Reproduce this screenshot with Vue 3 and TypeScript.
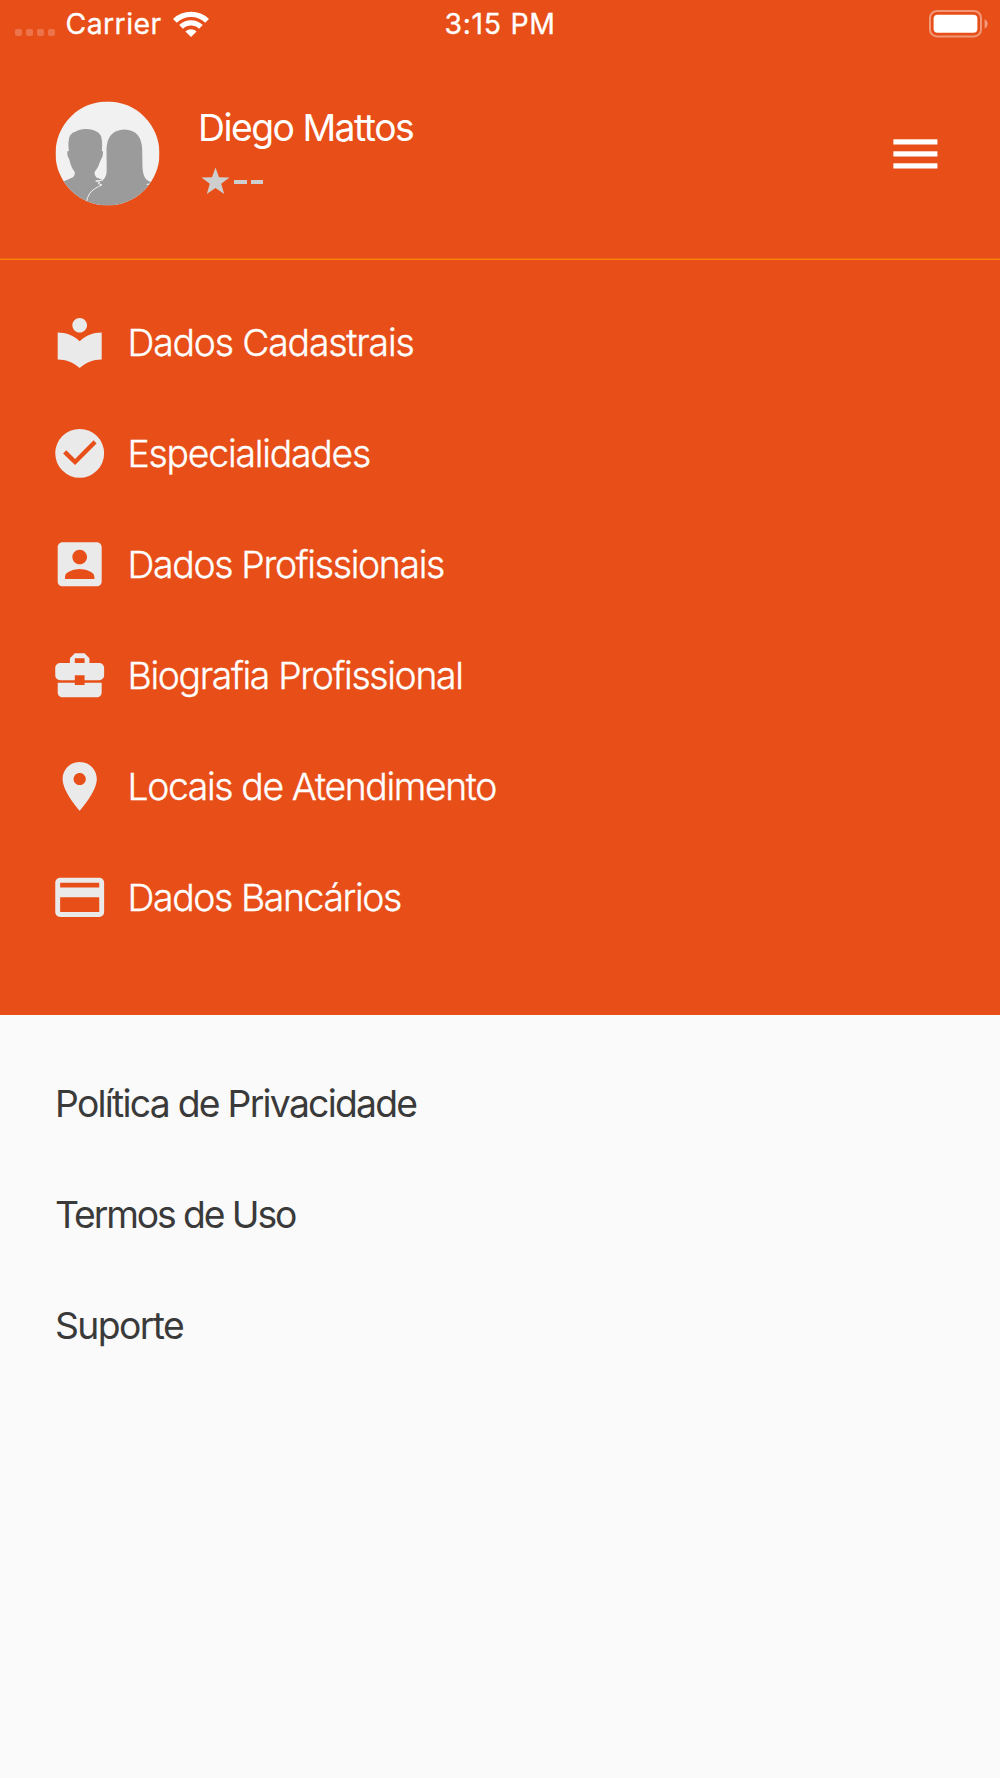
<script setup lang="ts">
interface MenuItem {
  label: string
  icon: string
  spacing: number
}

interface LinkItem {
  label: string
  spacing: number
}

const signalDots: number[] = [0, 1, 2, 3]

const menu: MenuItem[] = [
  {
    label: 'Dados Cadastrais',
    spacing: -1.15,
    icon: 'M12 11.55C9.64 9.35 6.48 8 3 8v11c3.48 0 6.64 1.35 9 3.55 2.36-2.19 5.52-3.55 9-3.55V8c-3.48 0-6.64 1.35-9 3.55zM12 8c1.66 0 3-1.34 3-3s-1.34-3-3-3-3 1.34-3 3 1.34 3 3 3z',
  },
  {
    label: 'Especialidades',
    spacing: -1.2,
    icon: 'M12 2a10 10 0 1 0 0 20a10 10 0 1 0 0-20zM5.2 12.1l1.3-1.4l3.6 3.6l7.6-7.6l1.2 1.3l-8.8 8.8z',
  },
  {
    label: 'Dados Profissionais',
    spacing: -1.3,
    icon: 'M3 5v14c0 1.1.89 2 2 2h14c1.1 0 2-.9 2-2V5c0-1.1-.9-2-2-2H5c-1.11 0-2 .9-2 2zm12 4c0 1.66-1.34 3-3 3s-3-1.34-3-3 1.34-3 3-3 3 1.34 3 3zm-9 8c0-2 4-3.1 6-3.1s6 1.1 6 3.1v1H6v-1z',
  },
  {
    label: 'Biografia Profissional',
    spacing: -1.33,
    icon: 'M10 16v-1H3.01L3 19c0 1.11.89 2 2 2h14c1.11 0 2-.89 2-2v-4h-7v1h-4zm10-9h-4.01V5l-2-2h-4l-2 2v2H4c-1.1 0-2 .9-2 2v3c0 1.11.89 2 2 2h6v-2h4v2h6c1.1 0 2-.9 2-2V9c0-1.1-.9-2-2-2zm-6 0h-4V5h4v2z',
  },
  {
    label: 'Locais de Atendimento',
    spacing: -1.36,
    icon: 'M12 2C8.13 2 5 5.13 5 9c0 5.25 7 13 7 13s7-7.75 7-13c0-3.87-3.13-7-7-7zm0 9.5c-1.38 0-2.5-1.12-2.5-2.5s1.12-2.5 2.5-2.5 2.5 1.12 2.5 2.5-1.12 2.5-2.5 2.5z',
  },
  {
    label: 'Dados Bancários',
    spacing: -1.36,
    icon: 'M20 4H4c-1.11 0-1.99.89-1.99 2L2 18c0 1.11.89 2 2 2h16c1.11 0 2-.89 2-2V6c0-1.11-.89-2-2-2zm0 14H4v-6h16v6zm0-10H4V6h16v2z',
  },
]

const links: LinkItem[] = [
  { label: 'Política de Privacidade', spacing: -1.74 },
  { label: 'Termos de Uso', spacing: -2.1 },
  { label: 'Suporte', spacing: -1.6 },
]
</script>

<template>
  <div class="screen">
    <div class="top">
      <div class="status">
        <div class="status-left">
          <span class="dots"><i v-for="d in signalDots" :key="d" class="dot"></i></span>
          <span class="carrier">Carrier</span>
          <svg class="wifi" width="38" height="28" viewBox="0 0 38 28">
            <path d="M1 8.9A26 26 0 0 1 37 8.9L33.2 12.7A20.6 20.6 0 0 0 4.8 12.7Z" />
            <path d="M7.2 15A17 17 0 0 1 30.8 15L27 18.8A11.6 11.6 0 0 0 11 18.8Z" />
            <path d="M13.4 21.4A8.2 8.2 0 0 1 24.6 21.4L19 27Z" />
          </svg>
        </div>
        <span class="clock">3:15 PM</span>
        <div class="status-right">
          <svg width="60" height="28" viewBox="0 0 60 28">
            <rect x="1" y="1" width="51" height="25.4" rx="7" fill="none" stroke="#fff" stroke-opacity=".42" stroke-width="2" />
            <rect x="4.6" y="4.7" width="43.8" height="18" rx="4" fill="#fff" />
            <path d="M55.6 9.2C59.6 10.8 59.6 16.8 55.6 18.4Z" fill="#fff" fill-opacity=".45" />
          </svg>
        </div>
      </div>

      <header class="profile">
        <svg class="avatar" width="105" height="105" viewBox="-.5 -.4 105 105">
          <defs>
            <clipPath id="avatar-clip"><circle cx="52" cy="52" r="52" /></clipPath>
          </defs>
          <g clip-path="url(#avatar-clip)">
            <rect width="104" height="104" fill="#f1f1f1" />
            <path
              fill="#9b9b9b"
              d="M0 83L9 79.5L17 76Q19.5 74.5 19.3 70.5Q15.5 66 14 58.5Q11.5 55 11.7 51Q11.6 49.4 13.4 49.8Q12 39 14.5 34Q17 30.5 20.3 30Q24 27.3 31 27.5Q41 28 45 33.5Q47.2 37 46.4 49.5Q47.8 49.4 47.6 51.5Q47.3 56 44.8 59.5Q43 66 39 70.8Q38.7 74.5 41 76L47.5 78.6Q51 75.5 51.2 69L51 48Q51.5 28.6 69 28Q86 28.6 86.7 48L87 66Q87.4 77 93 79.5L104 84V104H0Z"
            />
            <path
              d="M31 100Q33 91 39 87.5Q43 85 46.5 83.4L42.5 82.2L44.6 80.9L40.2 79.6L47.5 78.7M91 83L95 82.6"
              fill="none"
              stroke="#f1f1f1"
              stroke-width="1"
            />
          </g>
        </svg>
        <div class="identity">
          <div class="name">Diego Mattos</div>
          <div class="rating">
            <svg width="29" height="28" viewBox="0 0 29 28">
              <path fill="#cecece" d="M14.5 .5L18 10.2L28.6 10.4L20.2 16.8L23.2 27L14.5 21L5.8 27L8.8 16.8L.4 10.4L11 10.2Z" />
            </svg>
            <span class="dash"></span>
            <span class="dash"></span>
          </div>
        </div>
        <svg class="burger" width="45" height="31" viewBox="0 0 45 31" fill="#fff">
          <rect x=".4" y=".3" width="44" height="5.2" />
          <rect x=".4" y="12.3" width="44" height="5.2" />
          <rect x=".4" y="24.3" width="44" height="5.2" />
        </svg>
      </header>

      <nav class="menu">
        <a v-for="item in menu" :key="item.label" class="menu-item">
          <svg class="icon" viewBox="-.15 0 24 24"><path fill="#eaeaea" fill-rule="evenodd" :d="item.icon" /></svg>
          <span class="label" :style="{ letterSpacing: item.spacing + 'px' }">{{ item.label }}</span>
        </a>
      </nav>
    </div>

    <nav class="links">
      <a v-for="link in links" :key="link.label" class="link" :style="{ letterSpacing: link.spacing + 'px' }">{{ link.label }}</a>
    </nav>
  </div>
</template>

<style>
body {
  background: #fafafa;
}
</style>

<style scoped>
.screen {
  width: 1000px;
  height: 1778px;
  overflow: hidden;
  background: #fafafa;
  font-family: Inter, 'Liberation Sans', sans-serif;
}
.top {
  box-sizing: border-box;
  height: 1014.5px;
  background: #e84e18;
  color: #fff;
}
.status {
  display: grid;
  grid-template-columns: 1fr auto 1fr;
  align-items: center;
  height: 48px;
  font-size: 28.4px;
  font-weight: 400;
  -webkit-text-stroke: 0.3px #fff;
  line-height: 48px;
}
.status-left {
  display: flex;
  align-items: center;
  padding-left: 14.5px;
}
.dots {
  display: flex;
  gap: 4px;
  padding-top: 17px;
}
.dot {
  width: 7.2px;
  height: 7.2px;
  border-radius: 2px;
  background: rgba(255, 255, 255, 0.22);
}
.carrier {
  margin-left: 10.2px;
  letter-spacing: 0.45px;
}
.wifi {
  margin-left: 10.3px;
  fill: #fff;
}
.clock {
  letter-spacing: 0.7px;
}
.status-right {
  display: flex;
  justify-content: flex-end;
  padding-right: 11px;
}
.profile {
  box-sizing: border-box;
  display: flex;
  align-items: flex-start;
  height: 212px;
  padding: 53px 62px 0 55px;
  border-bottom: 1px solid #fc820a;
  box-shadow: inset 0 -1px #f06412;
}
.identity {
  flex: 1;
  margin-left: 38px;
}
.name {
  font-size: 37.3px;
  line-height: 46px;
  margin-top: 4px;
  letter-spacing: -1.5px;
}
.rating {
  display: flex;
  align-items: center;
  gap: 4px;
  margin-top: 15.9px;
  margin-left: 3px;
}
.dash {
  width: 12.5px;
  height: 4px;
  margin-top: 3px;
  background: #cecece;
}
.burger {
  margin-top: 37.5px;
}
.menu {
  display: flex;
  flex-direction: column;
  padding: 26.7px 0 0 50px;
}
.menu-item {
  display: flex;
  align-items: center;
  height: 111.1px;
}
.icon {
  width: 58.67px;
  height: 58.67px;
}
.label {
  margin-left: 18.9px;
  font-size: 37.3px;
  font-weight: 300;
  -webkit-text-stroke: 0.35px #fff;
}
.links {
  display: flex;
  flex-direction: column;
  padding: 33px 0 0 55px;
}
.link {
  height: 111.1px;
  font-size: 37.3px;
  font-weight: 400;
  line-height: 111.1px;
  color: #3a3a3a;
}
</style>
